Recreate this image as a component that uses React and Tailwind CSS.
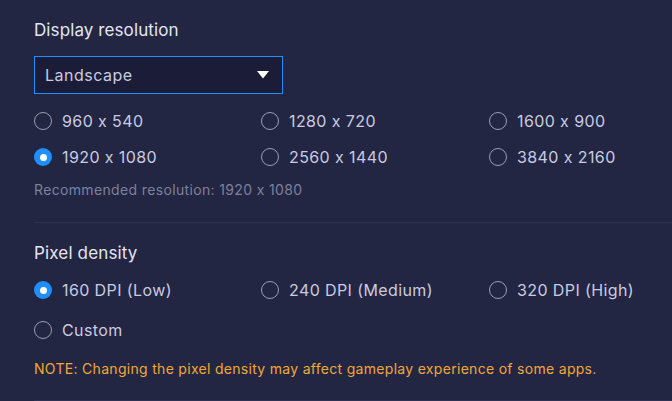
import { useState } from 'react';

const RESOLUTIONS = ['960 x 540', '1280 x 720', '1600 x 900', '1920 x 1080', '2560 x 1440', '3840 x 2160'];
const DENSITIES = ['160 DPI (Low)', '240 DPI (Medium)', '320 DPI (High)', 'Custom'];

function Radio({ label, checked, onSelect }) {
  return (
    <button type="button" onClick={onSelect} className="flex items-center gap-[10px] h-[22px] text-left">
      {checked ? (
        <span className="flex items-center justify-center w-[18px] h-[18px] rounded-full bg-[#1f8fff]">
          <span className="w-[7px] h-[7px] rounded-full bg-white" />
        </span>
      ) : (
        <span className="w-[18px] h-[18px] rounded-full border-[1.5px] border-[#9a9db4]" />
      )}
      <span className="text-[16px] leading-[22px] tracking-[0.4px] text-[#c9cbe0]">{label}</span>
    </button>
  );
}

export default function App() {
  const [res, setRes] = useState('1920 x 1080');
  const [dpi, setDpi] = useState('160 DPI (Low)');

  return (
    <div className="w-[672px] h-[401px] overflow-hidden bg-[#232642] pl-[34px] font-[Inter,'Noto_Sans',sans-serif] [font-feature-settings:'calt'_0]">
      {/* Display resolution */}
      <div className="pt-[19px]">
        <h2 className="text-[17px] leading-[22px] tracking-[0.1px] text-[#e4e5f0]">Display resolution</h2>
        <div className="mt-[15px] w-[249px] h-[38px] border border-[#1f8fff] bg-[#1b1d38] flex items-center justify-between pl-[10px] pr-[13px]">
          <span className="text-[16px] leading-[22px] tracking-[0.5px] text-[#c9cbe0]">Landscape</span>
          <svg width="12" height="8" viewBox="0 0 12 8" aria-hidden="true">
            <polygon points="0,0 12,0 6,7.5" fill="#ffffff" />
          </svg>
        </div>
        <div className="mt-[16px] grid grid-cols-[227px_228px_1fr] gap-y-[14px]">
          {RESOLUTIONS.map((r) => (
            <Radio key={r} label={r} checked={res === r} onSelect={() => setRes(r)} />
          ))}
        </div>
        <p className="mt-[12px] text-[14px] leading-[20px] tracking-[0.35px] text-[#7c809c]">
          Recommended resolution: 1920 x 1080
        </p>
        <div className="mt-[22px] h-px bg-[#2e3152]" />
      </div>

      {/* Pixel density */}
      <div className="pt-[19px]">
        <h2 className="text-[17px] leading-[22px] tracking-[0.15px] text-[#e4e5f0]">Pixel density</h2>
        <div className="mt-[15px] grid grid-cols-[227px_228px_1fr] gap-y-[18px]">
          {DENSITIES.map((d) => (
            <Radio key={d} label={d} checked={dpi === d} onSelect={() => setDpi(d)} />
          ))}
        </div>
        <p className="mt-[18px] text-[14px] leading-[20px] tracking-[0.3px] text-[#f0a63a]">
          NOTE: Changing the pixel density may affect gameplay experience of some apps.
        </p>
        <div className="mt-[21px] h-px bg-[#2e3152]" />
      </div>
    </div>
  );
}
